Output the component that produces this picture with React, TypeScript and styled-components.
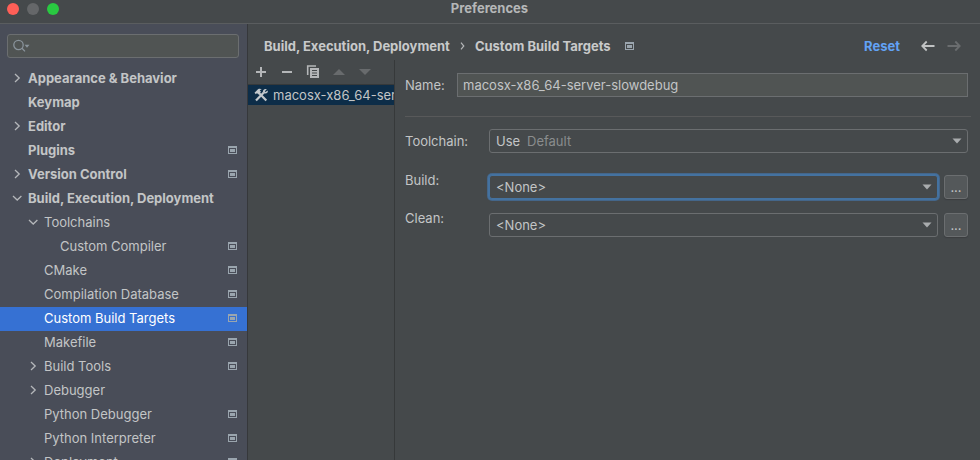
import React, { useState } from "react";
import styled, { createGlobalStyle, css } from "styled-components";

const color = {
  panel: "#45494b",
  sidebar: "#494d58",
  field: "#505453",
  border: "#6b6e70",
  text: "#c3c5c6",
  heading: "#c8c9ca",
  icon: "#b4b6b8",
  muted: "#8a8d8e",
  accent: "#3671d3",
  focus: "#4472a0",
  link: "#62a2f5",
  line: "#58595a",
};

const GlobalStyle = createGlobalStyle`
  *, *::before, *::after { box-sizing: border-box; }
  body {
    margin: 0;
    background: ${color.panel};
    color: ${color.text};
    font: 400 13px/16px Inter, "Liberation Sans", sans-serif;
  }
  svg { display: block; flex: none; }
`;

const Window = styled.div`
  display: flex;
  flex-direction: column;
  height: 100vh;
  overflow: hidden;
`;

const TitleBar = styled.header`
  display: grid;
  grid-template-columns: 1fr auto 1fr;
  flex: none;
  height: 24px;
  padding: 0 8px 0 7px;
  border-bottom: 1px solid #5a5d5f;
`;

const WindowButtons = styled.div`
  display: flex;
  gap: 8px;
  padding-top: 3px;
`;

const WindowButton = styled.button<{ $tone: string }>`
  width: 12px;
  height: 12px;
  padding: 0;
  border: 0;
  border-radius: 50%;
  background: ${(p) => p.$tone};
`;

const Title = styled.h1`
  margin: 0;
  font-size: 13px;
  line-height: 16px;
  font-weight: 700;
  color: #b5b7b8;
`;

const Body = styled.div`
  display: flex;
  flex: 1;
  min-height: 0;
`;

const Sidebar = styled.nav`
  display: flex;
  flex-direction: column;
  flex: none;
  width: 248px;
  overflow: hidden;
  background: ${color.sidebar};
  border-right: 1px solid #36383b;
`;

const SearchBox = styled.label`
  display: flex;
  align-items: center;
  flex: none;
  height: 24px;
  margin: 10px 8px 9px 7px;
  padding-left: 5px;
  border: 1px solid ${color.border};
  border-radius: 3px;
  background: ${color.field};
`;

const SearchInput = styled.input`
  flex: 1;
  min-width: 0;
  border: 0;
  outline: 0;
  background: transparent;
  color: ${color.text};
  font: inherit;
`;

const Tree = styled.ul`
  margin: 0;
  padding: 0;
  list-style: none;
`;

const TreeRow = styled.button<{ $level: number; $selected: boolean }>`
  display: flex;
  align-items: center;
  width: 100%;
  height: 24px;
  padding: 0 10px 2px ${(p) => 12 + p.$level * 16}px;
  border: 0;
  background: ${(p) => (p.$selected ? color.accent : "transparent")};
  color: ${(p) => (p.$selected ? "#ffffff" : color.text)};
  font: inherit;
  font-weight: ${(p) => (p.$level === 0 ? 700 : 400)};
  text-align: left;
  white-space: nowrap;
`;

const Twisty = styled.span`
  flex: none;
  width: 16px;
`;

const RowText = styled.span`
  flex: 1;
`;

const Main = styled.main`
  display: flex;
  flex-direction: column;
  flex: 1;
  min-width: 0;
`;

const Header = styled.div`
  display: flex;
  align-items: center;
  flex: none;
  height: 36px;
  padding: 8px 18px 0 16px;
  color: ${color.heading};
  font-weight: 700;
`;

const Crumbs = styled.div`
  display: flex;
  align-items: center;
  flex: 1;
  gap: 10px;
  white-space: nowrap;
`;

const CrumbEnd = styled.span`
  display: flex;
  align-items: center;
  gap: 14px;
`;

const ResetLink = styled.a`
  margin-right: 20px;
  color: ${color.link};
  text-decoration: none;
`;

const IconButton = styled.button`
  display: grid;
  place-items: center;
  width: 16px;
  height: 16px;
  padding: 0;
  border: 0;
  background: transparent;
`;

const HistoryButtons = styled.div`
  display: flex;
  gap: 10px;
`;

const Content = styled.div`
  display: flex;
  flex: 1;
  min-height: 0;
`;

const TargetPane = styled.section`
  flex: none;
  width: 147px;
  border-right: 1px solid #36393a;
`;

const Toolbar = styled.div`
  display: flex;
  align-items: center;
  gap: 10px;
  height: 25px;
  padding-left: 5px;
  border-bottom: 1px solid #36393a;
`;

const TargetRow = styled.button`
  display: flex;
  align-items: center;
  gap: 4px;
  width: 100%;
  height: 20px;
  padding: 0 0 0 6px;
  border: 0;
  background: #0d2d48;
  color: ${color.text};
  font: inherit;
  white-space: nowrap;
`;

const TargetName = styled.span`
  flex: 1;
  min-width: 0;
  overflow: hidden;
  text-align: left;
`;

const Form = styled.form`
  flex: 1;
  min-width: 0;
  padding: 13px 12px 0 10px;
`;

const NameRow = styled.div`
  display: grid;
  grid-template-columns: 52px 1fr;
  align-items: center;
`;

const Separator = styled.hr`
  height: 1px;
  margin: 19px -3px 12px 0;
  border: 0;
  background: ${color.line};
`;

const Fields = styled.div`
  display: grid;
  grid-template-columns: 84px 1fr;
  align-items: center;
`;

const StepFields = styled(Fields)`
  row-gap: 14px;
  align-items: start;
  margin-top: 22px;
`;

const StepLabel = styled.label`
  margin-top: -3px;
`;

const FieldRow = styled.div`
  display: flex;
  gap: 6px;
`;

const NameInput = styled.input`
  width: 100%;
  min-width: 0;
  height: 24px;
  padding: 0 5px;
  border: 1px solid ${color.border};
  outline: 0;
  background: ${color.field};
  color: ${color.text};
  font: inherit;
`;

const SelectBox = styled.div`
  display: grid;
  flex: 1;
  align-items: center;
  min-width: 0;
  > * { grid-area: 1 / 1; }
  > svg { justify-self: end; margin-right: 6px; pointer-events: none; }
`;

const Select = styled.select<{ $focused?: boolean }>`
  appearance: none;
  width: 100%;
  height: 24px;
  padding: 0 22px 0 6px;
  border: 1px solid ${color.border};
  border-radius: 3px;
  outline: 0;
  background: ${color.panel};
  color: ${color.text};
  font: inherit;
  ${(p) =>
    p.$focused &&
    css`
      border-color: ${color.focus};
      box-shadow: 0 0 0 1px ${color.focus}, 0 0 0 2px #44668a;
    `}
`;

const SelectHint = styled.span`
  padding-left: 38px;
  color: ${color.muted};
  pointer-events: none;
`;

const MoreButton = styled.button`
  width: 24px;
  height: 24px;
  padding: 0;
  border: 1px solid ${color.border};
  border-radius: 3px;
  background: #54585a;
  box-shadow: 0 1px 1px #3b3e40;
  color: ${color.text};
  font: inherit;
`;

function Chevron({ open }: { open: boolean }) {
  return (
    <svg width="10" height="10" viewBox="0 0 10 10" fill="none" stroke="#b4b7ba" strokeWidth="1.3">
      <path d={open ? "M1 3L5.2 7L9.4 3" : "M3 1L7.2 5L3 9"} />
    </svg>
  );
}

function ProjectIcon() {
  return (
    <svg width="9" height="8" viewBox="0 0 9 8" shapeRendering="crispEdges" fill="#9aa5ae">
      <path fillRule="evenodd" d="M0 0H9V8H0ZM1 2V7H8V2Z" />
      <path d="M2 3H7V6H2Z" />
    </svg>
  );
}

function SearchIcon() {
  return (
    <svg width="17" height="14" viewBox="0 0 17 14" fill="none" stroke="#89939b" strokeWidth="1.3">
      <circle cx="5.5" cy="6" r="4.7" />
      <path d="M9 9.3L12 12.4" />
      <path d="M11.5 5.7H16.5L14 8.7Z" fill="#89939b" stroke="none" />
    </svg>
  );
}

function Caret() {
  return (
    <svg width="10" height="6" viewBox="0 0 10 6">
      <path d="M0.5 0.5H9.5L5 5.5Z" fill="#a9acae" />
    </svg>
  );
}

function Arrow({ tone, forward }: { tone: string; forward?: boolean }) {
  return (
    <svg width="14" height="12" viewBox="0 0 14 12" fill="none" stroke={tone} strokeWidth="1.8">
      <path d={forward ? "M0.5 6H12.5M8.3 1.5L12.7 6L8.3 10.5" : "M13.5 6H1.5M5.7 1.5L1.3 6L5.7 10.5"} />
    </svg>
  );
}

const toolIcons: Record<string, React.ReactNode> = {
  Add: <path d="M8 3V13M3 8H13" stroke={color.icon} strokeWidth="2" />,
  Remove: <path d="M3 8H13" stroke={color.icon} strokeWidth="2" />,
  Copy: (
    <>
      <path d="M2.7 11V2H11" fill="none" stroke={color.icon} strokeWidth="1.6" />
      <path fill={color.icon} fillRule="evenodd" d="M5 4H14V14H5ZM7 6V7H12V6ZM7 8.5V9.5H12V8.5ZM7 11V12H12V11Z" />
    </>
  ),
  "Move up": <path d="M2 11H14L8 5Z" fill="#686b6d" />,
  "Move down": <path d="M2 5H14L8 11Z" fill="#686b6d" />,
};

function ToolsIcon() {
  return (
    <svg width="15" height="14" viewBox="0 0 15 14" fill="none" stroke="#c3c8cc">
      <path d="M2 12.5L9.8 4.6" strokeWidth="2.2" />
      <path d="M12.8 1.2L10.8 3.2L11.4 4.1L13.8 2.5C14.3 5 12 6.2 10 5.2L8.9 4C8.7 2.1 10.2 0.4 12.8 1.2Z" fill="#c3c8cc" stroke="none" />
      <path d="M5 5L12.3 12.6" strokeWidth="2.2" />
      <path d="M0.5 4.8L4 1.2C5.2 0.4 6.8 0.6 7.8 1.2L5.7 2.2L7 3.8L4.3 6.5L3 5L1.9 6.2Z" fill="#c3c8cc" stroke="none" />
    </svg>
  );
}

type Item = { name: string; level: number; state?: "open" | "closed"; project?: boolean };

const items: Item[] = [
  { name: "Appearance & Behavior", level: 0, state: "closed" },
  { name: "Keymap", level: 0 },
  { name: "Editor", level: 0, state: "closed" },
  { name: "Plugins", level: 0, project: true },
  { name: "Version Control", level: 0, state: "closed", project: true },
  { name: "Build, Execution, Deployment", level: 0, state: "open" },
  { name: "Toolchains", level: 1, state: "open" },
  { name: "Custom Compiler", level: 2, project: true },
  { name: "CMake", level: 1, project: true },
  { name: "Compilation Database", level: 1, project: true },
  { name: "Custom Build Targets", level: 1, project: true },
  { name: "Makefile", level: 1, project: true },
  { name: "Build Tools", level: 1, state: "closed", project: true },
  { name: "Debugger", level: 1, state: "closed" },
  { name: "Python Debugger", level: 1, project: true },
  { name: "Python Interpreter", level: 1, project: true },
  { name: "Deployment", level: 1, state: "closed", project: true },
];

export default function App() {
  const [selected, setSelected] = useState("Custom Build Targets");
  const [name, setName] = useState("macosx-x86_64-server-slowdebug");

  return (
    <>
      <GlobalStyle />
      <Window>
        <TitleBar>
          <WindowButtons>
            <WindowButton $tone="#ff5f57" aria-label="Close" />
            <WindowButton $tone="#656769" aria-label="Minimize" />
            <WindowButton $tone="#29c941" aria-label="Zoom" />
          </WindowButtons>
          <Title>Preferences</Title>
        </TitleBar>
        <Body>
          <Sidebar>
            <SearchBox>
              <SearchIcon />
              <SearchInput type="text" aria-label="Search settings" />
            </SearchBox>
            <Tree>
              {items.map((item) => (
                <li key={item.name}>
                  <TreeRow $level={item.level} $selected={item.name === selected} onClick={() => setSelected(item.name)}>
                    <Twisty>{item.state && <Chevron open={item.state === "open"} />}</Twisty>
                    <RowText>{item.name}</RowText>
                    {item.project && <ProjectIcon />}
                  </TreeRow>
                </li>
              ))}
            </Tree>
          </Sidebar>
          <Main>
            <Header>
              <Crumbs>
                <span>Build, Execution, Deployment</span>
                <svg width="5" height="8" viewBox="0 0 5 8" fill="none" stroke="#b4b6b8" strokeWidth="1.2">
                  <path d="M1 0.7L3.8 4L1 7.3" />
                </svg>
                <CrumbEnd>
                  Custom Build Targets
                  <ProjectIcon />
                </CrumbEnd>
              </Crumbs>
              <ResetLink href="#reset">Reset</ResetLink>
              <HistoryButtons>
                <IconButton aria-label="Back"><Arrow tone="#c0c2c3" /></IconButton>
                <IconButton aria-label="Forward"><Arrow tone="#6a6d6f" forward /></IconButton>
              </HistoryButtons>
            </Header>
            <Content>
              <TargetPane>
                <Toolbar>
                  {Object.entries(toolIcons).map(([label, shape]) => (
                    <IconButton key={label} aria-label={label}>
                      <svg width="16" height="16" viewBox="0 0 16 16">{shape}</svg>
                    </IconButton>
                  ))}
                </Toolbar>
                <TargetRow>
                  <ToolsIcon />
                  <TargetName>{name}</TargetName>
                </TargetRow>
              </TargetPane>
              <Form onSubmit={(e) => e.preventDefault()}>
                <NameRow>
                  <label htmlFor="name">Name:</label>
                  <NameInput id="name" type="text" value={name} onChange={(e) => setName(e.target.value)} />
                </NameRow>
                <Separator />
                <Fields>
                  <label htmlFor="toolchain">Toolchain:</label>
                  <SelectBox>
                    <Select id="toolchain"><option>Use</option></Select>
                    <SelectHint>Default</SelectHint>
                    <Caret />
                  </SelectBox>
                </Fields>
                <StepFields>
                  {["Build", "Clean"].map((step) => (
                    <React.Fragment key={step}>
                      <StepLabel htmlFor={step}>{step}:</StepLabel>
                      <FieldRow>
                        <SelectBox>
                          <Select id={step} $focused={step === "Build"}><option>&lt;None&gt;</option></Select>
                          <Caret />
                        </SelectBox>
                        <MoreButton type="button" aria-label={`Edit ${step.toLowerCase()} tool`}>...</MoreButton>
                      </FieldRow>
                    </React.Fragment>
                  ))}
                </StepFields>
              </Form>
            </Content>
          </Main>
        </Body>
      </Window>
    </>
  );
}
